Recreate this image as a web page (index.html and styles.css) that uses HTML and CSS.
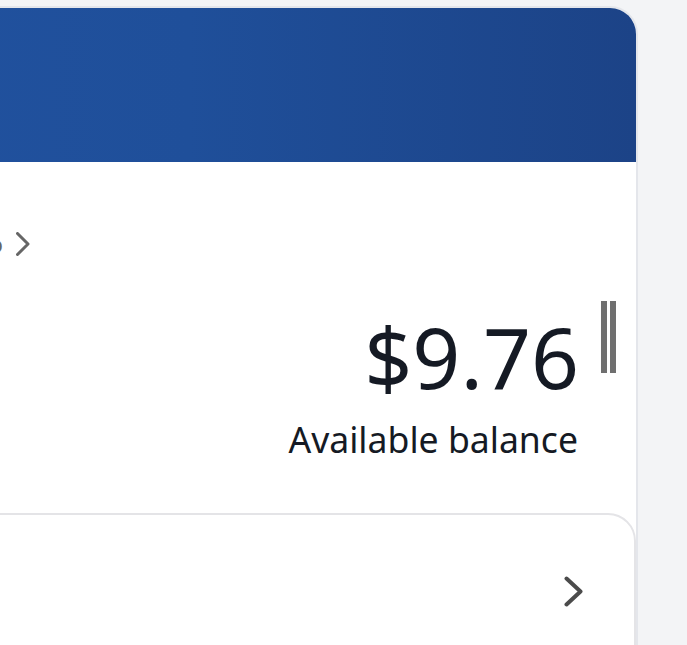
FILE: index.html
```html
<!DOCTYPE html>
<html lang="en">
<head>
<meta charset="utf-8">
<title>Balance</title>
<link rel="stylesheet" href="styles.css">
</head>
<body>
<div class="viewport">
  <div class="card">
    <div class="card-header"></div>
    <div class="info-row">
      <span class="info-text">Account info</span>
      <svg class="chev-small" width="14" height="24" viewBox="0 0 14 24"><polyline points="1.5,1.5 12,12 1.5,22.5" fill="none" stroke="#666" stroke-width="3" stroke-linecap="round" stroke-linejoin="round"/></svg>
    </div>
    <div class="balance-row">
      <div class="balance">
        <div class="amount">$9.76</div>
        <div class="label">Available balance</div>
      </div>
      <div class="bars"><span class="bar"></span><span class="bar"></span></div>
    </div>
    <div class="sub-card">
      <svg class="chev-big" width="19" height="31" viewBox="0 0 19 31"><polyline points="2.5,2.5 16.5,15.5 2.5,28.5" fill="none" stroke="#4b4b4b" stroke-width="4" stroke-linecap="round" stroke-linejoin="round"/></svg>
    </div>
  </div>
</div>
</body>
</html>
```
FILE: styles.css
```css
html, body {
  margin: 0;
  padding: 0;
  background: #f3f4f6;
  font-family: "Noto Sans", "Open Sans", sans-serif;
}

.viewport {
  width: 687px;
  height: 645px;
  box-sizing: border-box;
  padding: 6px 49px 0 0;
  display: flex;
  justify-content: flex-end;
  overflow: hidden;
}

.card {
  flex: 0 0 1000px;
  width: 1000px;
  box-sizing: border-box;
  background: #fff;
  border: 2px solid #e4e6eb;
  border-radius: 0 28px 0 0;
  overflow: hidden;
  height: 700px;
}

.card-header {
  height: 154px;
  background: linear-gradient(90deg, #2253a2 0%, #1f4f9a 55%, #1c4387 100%);
}

.info-row {
  display: flex;
  align-items: center;
  gap: 13px;
  margin-top: 70px;
  padding-left: 24px;
  height: 24px;
}

.info-text {
  width: 339px;
  text-align: right;
  font-size: 24px;
  line-height: 24px;
  color: #666;
  white-space: nowrap;
}

.chev-small {
  display: block;
}

.balance-row {
  display: flex;
  justify-content: flex-end;
  align-items: flex-start;
  gap: 22px;
  margin-top: 45px;
  padding-right: 20px;
}

.balance {
  margin-top: 6px;
  text-align: right;
  color: #151a24;
}

.amount {
  font-size: 84px;
  line-height: 1.2;
}

.label {
  margin-top: 10px;
  font-size: 35.6px;
  line-height: 42px;
  margin-right: 1px;
}

.bars {
  display: flex;
  gap: 3px;
}

.bar {
  display: block;
  width: 6px;
  height: 72px;
  background: #6f6f6f;
}

.sub-card {
  margin-top: 53px;
  margin-left: 40px;
  height: 200px;
  box-sizing: border-box;
  border: 2px solid #e4e4e7;
  border-radius: 28px;
  display: flex;
  justify-content: flex-end;
  align-items: flex-start;
  padding: 61px 51px 0 0;
}

.chev-big {
  display: block;
}
```
